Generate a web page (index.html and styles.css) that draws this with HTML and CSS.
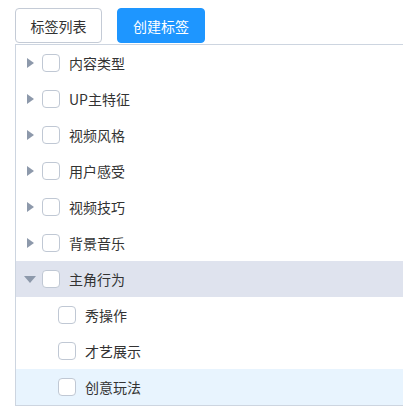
FILE: index.html
```html
<!DOCTYPE html>
<html lang="zh">
<head>
<meta charset="utf-8">
<link rel="stylesheet" href="styles.css">
</head>
<body>
<div class="page">
  <div class="tabs">
    <button class="btn">标签列表</button>
    <button class="btn primary">创建标签</button>
  </div>
  <div class="tree">
    <div class="row"><span class="caret right"></span><span class="cb"></span><span class="label">内容类型</span></div>
    <div class="row"><span class="caret right"></span><span class="cb"></span><span class="label">UP主特征</span></div>
    <div class="row"><span class="caret right"></span><span class="cb"></span><span class="label">视频风格</span></div>
    <div class="row"><span class="caret right"></span><span class="cb"></span><span class="label">用户感受</span></div>
    <div class="row"><span class="caret right"></span><span class="cb"></span><span class="label">视频技巧</span></div>
    <div class="row"><span class="caret right"></span><span class="cb"></span><span class="label">背景音乐</span></div>
    <div class="row current"><span class="caret down"></span><span class="cb"></span><span class="label">主角行为</span></div>
    <div class="row child"><span class="caret none"></span><span class="cb"></span><span class="label">秀操作</span></div>
    <div class="row child"><span class="caret none"></span><span class="cb"></span><span class="label">才艺展示</span></div>
    <div class="row child hover"><span class="caret none"></span><span class="cb"></span><span class="label">创意玩法</span></div>
  </div>
</div>
</body>
</html>
```
FILE: styles.css
```css
html, body {
  margin: 0;
  padding: 0;
  background: #fff;
}
body {
  font-family: "Noto Sans CJK SC", "Noto Sans", sans-serif;
  font-size: 14px;
  color: #333;
}
.page {
  padding: 8px 0 0 15px;
}
.tabs {
  display: flex;
  gap: 15px;
  height: 35px;
}
.btn {
  font-family: inherit;
  font-size: 14px;
  height: 35px;
  width: 87px;
  padding: 0;
  border: 1px solid #c4cbd6;
  border-radius: 4px;
  background: #fff;
  color: #333;
}
.btn.primary {
  width: 88px;
  background: #1e96ff;
  border-color: #1e96ff;
  color: #fff;
}
.tree {
  margin-top: 1px;
  border: 1px solid #cdd5e0;
  border-right: none;
  padding-top: 0;
}
.row {
  height: 36px;
  display: flex;
  align-items: center;
  padding-left: 9px;
}
.row.child {
  padding-left: 25px;
}
.row.current {
  background: #dfe3ee;
}
.row.hover {
  background: #e8f4fe;
}
.caret {
  width: 9px;
  height: 10px;
  margin-right: 8px;
  position: relative;
}
.caret.right::before {
  content: "";
  position: absolute;
  left: 2px;
  top: 0;
  border-style: solid;
  border-width: 5px 0 5px 7px;
  border-color: transparent transparent transparent #8d99ab;
}
.caret.down::before {
  content: "";
  position: absolute;
  left: -1px;
  top: 2px;
  border-style: solid;
  border-width: 7px 6px 0 6px;
  border-color: #8d99ab transparent transparent transparent;
}
.cb {
  width: 16px;
  height: 16px;
  border: 1px solid #c0c8d4;
  border-radius: 4px;
  background: #fff;
  margin-right: 9px;
  flex: none;
}
.label {
  line-height: 20px;
}
```
